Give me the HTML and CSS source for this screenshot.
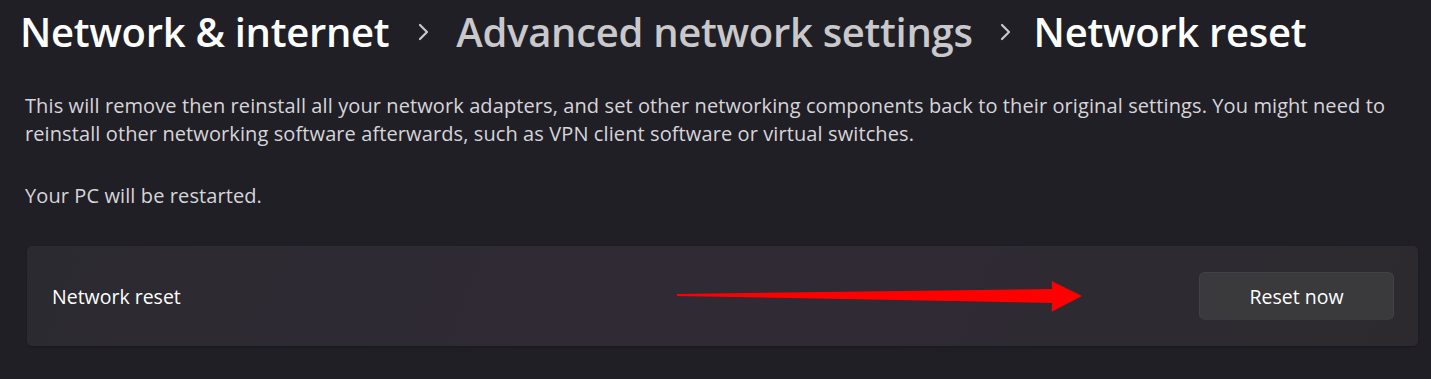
FILE: index.html
```html
<!DOCTYPE html>
<html lang="en">
<head>
<meta charset="utf-8">
<title>Network reset</title>
<link rel="stylesheet" href="styles.css">
</head>
<body>
<main class="page">
  <nav class="breadcrumb">
    <span class="crumb crumb-parent-strong">Network &amp; internet</span>
    <svg class="chevron" width="12" height="18" viewBox="0 0 12 18" aria-hidden="true"><path d="M2 2 L9 9 L2 16" fill="none" stroke="#c9c9cb" stroke-width="2.2" stroke-linecap="round" stroke-linejoin="round"/></svg>
    <span class="crumb crumb-parent">Advanced network settings</span>
    <svg class="chevron chevron-tight" width="12" height="18" viewBox="0 0 12 18" aria-hidden="true"><path d="M2 2 L9 9 L2 16" fill="none" stroke="#c9c9cb" stroke-width="2.2" stroke-linecap="round" stroke-linejoin="round"/></svg>
    <span class="crumb crumb-current">Network reset</span>
  </nav>

  <p class="desc">This will remove then reinstall all your network adapters, and set other networking components back to their original settings. You might need to reinstall other networking software afterwards, such as VPN client software or virtual switches.</p>
  <p class="desc desc-note">Your PC will be restarted.</p>

  <section class="card">
    <span class="card-label">Network reset</span>
    <button class="btn" type="button">Reset now</button>
    <svg class="annotation-arrow" width="420" height="40" viewBox="0 0 420 40" aria-hidden="true">
      <polygon points="0,14 375,9 374.7,1 405,16 374.7,31.7 375,23 0,16" fill="#ff0000"/>
    </svg>
  </section>
</main>
</body>
</html>
```

FILE: styles.css
```css
* { box-sizing: border-box; }

html, body {
  margin: 0;
  padding: 0;
  background: #211f26;
}

body {
  font-family: "Open Sans", "Noto Sans", sans-serif;
  color: #ffffff;
  width: 1431px;
  height: 379px;
  overflow: hidden;
}

.page {
  padding: 1px 25px 0 25px;
}

.breadcrumb {
  display: flex;
  align-items: center;
  height: 62px;
  margin-left: -5px;
}

.crumb {
  font-size: 40px;
  font-weight: 600;
  line-height: 62px;
  white-space: nowrap;
  letter-spacing: -0.3px;
}

.crumb-parent-strong { color: #ffffff; }
.crumb-parent { color: #c9c8cb; }
.crumb-current { color: #ffffff; }

.chevron {
  margin: 0 26px 0 29px;
  flex: none;
}

.chevron-tight {
  margin: 0 22px 0 27px;
}

.desc {
  margin: 29px 0 0;
  font-size: 20px;
  line-height: 28px;
  color: #d6d5d9;
  letter-spacing: 0.1px;
}

.desc-note {
  margin-top: 34px;
}

.card {
  position: relative;
  display: flex;
  align-items: center;
  justify-content: space-between;
  margin: 36px 0 0 2px;
  width: 1391px;
  height: 100px;
  padding: 0 24px 0 25px;
  border-radius: 5px;
  background: linear-gradient(110deg, #2c2a31 0%, #302a35 50%, #2c2a2f 100%);
  box-shadow: 0 1px 2px rgba(0,0,0,0.25);
}

.card-label {
  font-size: 19.5px;
  color: #ffffff;
}

.btn {
  width: 195px;
  height: 48px;
  border-radius: 6px;
  border: 1px solid #444246;
  border-bottom-color: #3a393c;
  background: #3a393c;
  color: #ffffff;
  font-family: inherit;
  font-size: 19.5px;
  padding: 0;
}

.annotation-arrow {
  position: absolute;
  left: 650px;
  top: 34px;
}
```
